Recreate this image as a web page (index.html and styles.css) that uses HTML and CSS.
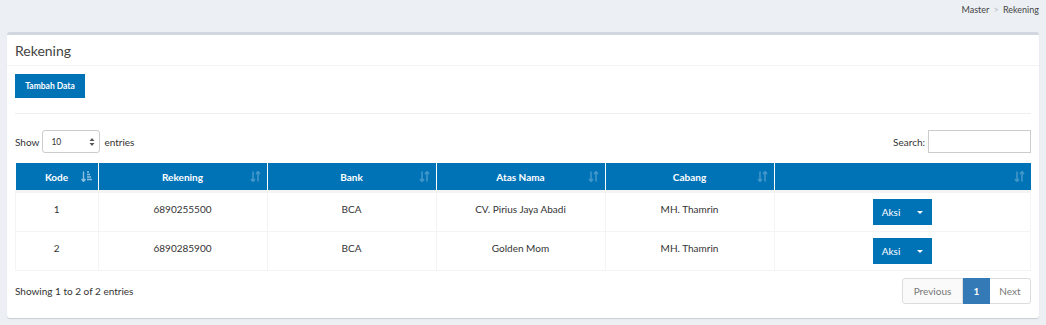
FILE: index.html
```html
<!DOCTYPE html>
<html>
<head>
    <link rel="stylesheet" href="styles.css">
</head>
<body>
    <div class="crumbs">
        <span>Master</span>
        <span class="sep">&gt;</span>
        <span>Rekening</span>
    </div>

    <div class="box">
        <div class="box-header">
            <h3>Rekening</h3>
        </div>
        <div class="box-body">
            <button class="btn">Tambah Data</button>
            <hr>

            <div class="table-top">
                <label class="length">Show
                    <span class="select">10
                        <svg width="6" height="10" viewBox="0 0 6 10"><path d="M3 1 L5.5 4 H0.5 Z M3 9 L5.5 6 H0.5 Z" fill="#555"/></svg>
                    </span>
                    entries</label>
                <label class="search">Search: <span class="input"></span></label>
            </div>

            <table class="grid">
                <thead>
                    <tr>
                        <th class="c-kode">Kode <svg class="sort on" width="11" height="11" viewBox="0 0 11 11"><path d="M2.5 0.5 V10 M0.5 8 L2.5 10.5 L4.5 8" stroke="#fff" stroke-width="1.4" fill="none"/><path d="M6 1 H8 M6 3.5 H9 M6 6 H10 M6 8.5 H11" stroke="#fff" stroke-width="1.4"/></svg></th>
                        <th class="c-col">Rekening <svg class="sort" width="11" height="11" viewBox="0 0 11 11"><path d="M3 0.5 V10 M1 8 L3 10.5 L5 8 M8 10.5 V1 M6 3 L8 0.5 L10 3" stroke="#fff" stroke-width="1.6" fill="none"/></svg></th>
                        <th class="c-col">Bank <svg class="sort" width="11" height="11" viewBox="0 0 11 11"><path d="M3 0.5 V10 M1 8 L3 10.5 L5 8 M8 10.5 V1 M6 3 L8 0.5 L10 3" stroke="#fff" stroke-width="1.6" fill="none"/></svg></th>
                        <th class="c-col">Atas Nama <svg class="sort" width="11" height="11" viewBox="0 0 11 11"><path d="M3 0.5 V10 M1 8 L3 10.5 L5 8 M8 10.5 V1 M6 3 L8 0.5 L10 3" stroke="#fff" stroke-width="1.6" fill="none"/></svg></th>
                        <th class="c-col">Cabang <svg class="sort" width="11" height="11" viewBox="0 0 11 11"><path d="M3 0.5 V10 M1 8 L3 10.5 L5 8 M8 10.5 V1 M6 3 L8 0.5 L10 3" stroke="#fff" stroke-width="1.6" fill="none"/></svg></th>
                        <th><svg class="sort" width="11" height="11" viewBox="0 0 11 11"><path d="M3 0.5 V10 M1 8 L3 10.5 L5 8 M8 10.5 V1 M6 3 L8 0.5 L10 3" stroke="#fff" stroke-width="1.6" fill="none"/></svg></th>
                    </tr>
                </thead>
                <tbody>
                    <tr>
                        <td>1</td>
                        <td>6890255500</td>
                        <td>BCA</td>
                        <td>CV. Pirius Jaya Abadi</td>
                        <td>MH. Thamrin</td>
                        <td><span class="aksi">Aksi <span class="caret"></span></span></td>
                    </tr>
                    <tr>
                        <td>2</td>
                        <td>6890285900</td>
                        <td>BCA</td>
                        <td>Golden Mom</td>
                        <td>MH. Thamrin</td>
                        <td><span class="aksi">Aksi <span class="caret"></span></span></td>
                    </tr>
                </tbody>
            </table>

            <div class="table-bottom">
                <div class="info">Showing 1 to 2 of 2 entries</div>
                <div class="pager">
                    <span class="pg prev">Previous</span>
                    <span class="pg active">1</span>
                    <span class="pg next">Next</span>
                </div>
            </div>
        </div>
    </div>
</body>
</html>
```

FILE: styles.css
```css
html, body {
    margin: 0;
    padding: 0;
}
body {
    background: #ecf0f5;
    font-family: Lato, "Open Sans", sans-serif;
    color: #333;
    width: 1046px;
    height: 325px;
    overflow: hidden;
}
.crumbs {
    height: 32px;
    box-sizing: border-box;
    padding: 4px 7px 0 0;
    text-align: right;
    font-size: 9px;
    color: #444;
}
.crumbs .sep {
    color: #bbb;
    margin: 0 2px;
}
.box {
    margin: 0 7px;
    background: #fff;
    border-top: 3px solid #d2d6de;
    border-radius: 3px;
    box-shadow: 0 1px 1px rgba(0,0,0,0.15);
    height: 286px;
    box-sizing: border-box;
}
.box-header {
    height: 30px;
    border-bottom: 1px solid #f4f4f4;
    padding: 0 8px;
    display: flex;
    align-items: center;
}
.box-header h3 {
    margin: 0;
    font-size: 14px;
    font-weight: normal;
    color: #444;
}
.box-body {
    padding: 8px 8px 0 8px;
}
.btn {
    display: block;
    background: #0073b7;
    color: #fff;
    border: none;
    border-radius: 0;
    font-family: Lato, sans-serif;
    font-size: 8.5px;
    font-weight: bold;
    width: 70px;
    height: 24px;
    padding: 0;
}
hr {
    border: none;
    border-top: 1px solid #eee;
    margin: 15px 0 0 0;
}
.table-top {
    display: flex;
    justify-content: space-between;
    align-items: center;
    margin-top: 16px;
    height: 23px;
    font-size: 10px;
}
.length, .search {
    display: flex;
    align-items: center;
}
.select {
    width: 58px;
    height: 23px;
    box-sizing: border-box;
    border: 1px solid #ccc;
    border-radius: 3px;
    margin: 0 4px 0 3px;
    display: flex;
    align-items: center;
    justify-content: space-between;
    padding: 0 4px 0 8px;
    font-size: 8.5px;
}
.input {
    width: 103px;
    height: 23px;
    box-sizing: border-box;
    border: 1px solid #ccc;
    margin-left: 3px;
}
.grid {
    width: 1016px;
    border-collapse: collapse;
    margin-top: 10px;
    font-size: 10px;
    table-layout: fixed;
}
.grid th {
    background: #0073b7;
    color: #fff;
    height: 27px;
    padding: 0;
    font-size: 10px;
    font-weight: bold;
    position: relative;
    border-left: 1px solid #fff;
}
.grid th:first-child {
    border-left: none;
}
.c-kode {
    width: 82px;
}
.c-col {
    width: 168px;
}
.sort {
    position: absolute;
    right: 6px;
    top: 8px;
    opacity: 0.25;
}
.sort.on {
    opacity: 0.55;
}
.grid td {
    text-align: center;
    height: 38px;
    padding: 0;
    border: 1px solid #f4f4f4;
    vertical-align: top;
    line-height: 32px;
}
.grid tbody tr:first-child td {
    border-top: 3px solid #f4f4f4;
}
.aksi {
    display: inline-flex;
    align-items: center;
    justify-content: space-between;
    box-sizing: border-box;
    width: 59px;
    height: 26px;
    margin-top: 6px;
    padding: 0 9px 0 9px;
    background: #0073b7;
    color: #fff;
    font-size: 10px;
    line-height: 26px;
    vertical-align: top;
}
.caret {
    width: 0;
    height: 0;
    border-left: 3px solid transparent;
    border-right: 3px solid transparent;
    border-top: 3px solid #fff;
}
.table-bottom {
    display: flex;
    justify-content: space-between;
    align-items: center;
    margin-top: 7px;
    font-size: 10px;
}
.pager {
    display: flex;
    height: 26px;
}
.pg {
    display: flex;
    align-items: center;
    justify-content: center;
    border: 1px solid #ddd;
    color: #777;
    box-sizing: border-box;
    height: 26px;
    font-size: 10px;
}
.prev {
    width: 61px;
    border-radius: 3px 0 0 3px;
    background: #fafafa;
}
.active {
    width: 27px;
    background: #337ab7;
    border-color: #337ab7;
    color: #fff;
    font-weight: bold;
}
.next {
    width: 41px;
    border-radius: 0 3px 3px 0;
    border-left: none;
}
```
